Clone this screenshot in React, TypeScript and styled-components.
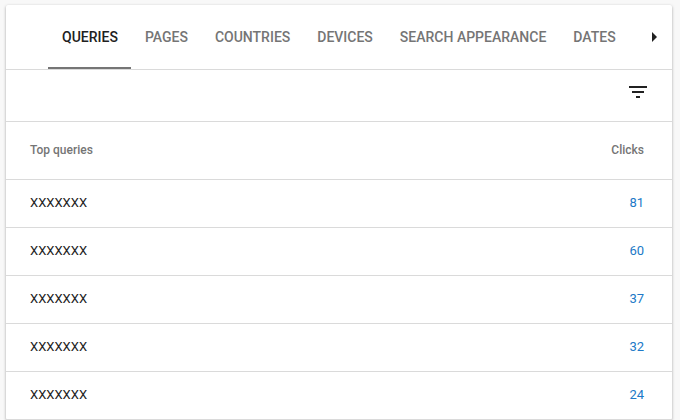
import React from 'react';
import styled, { createGlobalStyle } from 'styled-components';

const GlobalStyle = createGlobalStyle`
  * { box-sizing: border-box; }
  html { background: #f8f8f8; overflow: hidden; }
  body { margin: 0; font-family: Roboto, "Liberation Sans", sans-serif; color: #212121; }
`;

const Card = styled.main`
  margin: 5px 8px 0 6px;
  background: #fff;
  border-radius: 2px;
  box-shadow: 0 1px 3px rgba(0, 0, 0, 0.35);
`;

const TabBar = styled.nav`
  display: flex;
  align-items: stretch;
  height: 65px;
  padding: 0 9px 0 42px;
  border-bottom: 1px solid #dadada;
`;

const Tab = styled.button<{ $active?: boolean }>`
  padding: 2px 13px 0 14px;
  border: 0;
  border-bottom: 2px solid ${(p) => (p.$active ? '#757575' : 'transparent')};
  background: none;
  color: ${(p) => (p.$active ? '#212121' : '#757575')};
  font: 500 14px/20px Roboto, sans-serif;
  white-space: nowrap;
  cursor: pointer;
`;

const IconButton = styled.button`
  display: grid;
  place-items: center;
  padding: 0;
  border: 0;
  background: none;
  color: #212121;
  cursor: pointer;
`;

const NextButton = styled(IconButton)`
  width: 16px;
  margin-left: auto;
`;

const Toolbar = styled.div`
  display: flex;
  justify-content: flex-end;
  align-items: center;
  height: 52px;
  padding: 0 22px 8px;
  border-bottom: 1px solid #dadada;
`;

const Table = styled.table`
  width: 100%;
  border-collapse: separate;
  border-spacing: 0;
`;

const HeadCell = styled.th<{ $end?: boolean }>`
  height: 58px;
  padding: 0 28px 2px 24px;
  border-bottom: 1px solid #dadada;
  color: #757575;
  font: 500 12px/16px Roboto, sans-serif;
  text-align: ${(p) => (p.$end ? 'right' : 'left')};
`;

const Cell = styled.td<{ $end?: boolean }>`
  height: 48px;
  padding: 0 28px 2px 24px;
  border-bottom: 1px solid #dadada;
  color: ${(p) => (p.$end ? '#2079c7' : '#212121')};
  font: 400 13px/20px Roboto, sans-serif;
  text-align: ${(p) => (p.$end ? 'right' : 'left')};
`;

const tabs = ['QUERIES', 'PAGES', 'COUNTRIES', 'DEVICES', 'SEARCH APPEARANCE', 'DATES'];
const clicks = [81, 60, 37, 32, 24];

export default function App() {
  return (
    <>
      <GlobalStyle />
      <Card>
        <TabBar>
          {tabs.map((tab, i) => (
            <Tab key={tab} $active={i === 0}>{tab}</Tab>
          ))}
          <NextButton aria-label="More tabs">
            <svg width="6" height="10" viewBox="0 0 6 10" fill="currentColor"><path d="M0 0l5 5-5 5z" /></svg>
          </NextButton>
        </TabBar>
        <Toolbar>
          <IconButton aria-label="Filter">
            <svg width="24" height="24" viewBox="0 0 24 24" fill="currentColor"><path d="M10 18h4v-2h-4v2zM3 6v2h18V6H3zm3 7h12v-2H6v2z" /></svg>
          </IconButton>
        </Toolbar>
        <Table>
          <thead>
            <tr>
              <HeadCell scope="col">Top queries</HeadCell>
              <HeadCell scope="col" $end>Clicks</HeadCell>
            </tr>
          </thead>
          <tbody>
            {clicks.map((count) => (
              <tr key={count}>
                <Cell>XXXXXXX</Cell>
                <Cell $end>{count}</Cell>
              </tr>
            ))}
          </tbody>
        </Table>
      </Card>
    </>
  );
}
